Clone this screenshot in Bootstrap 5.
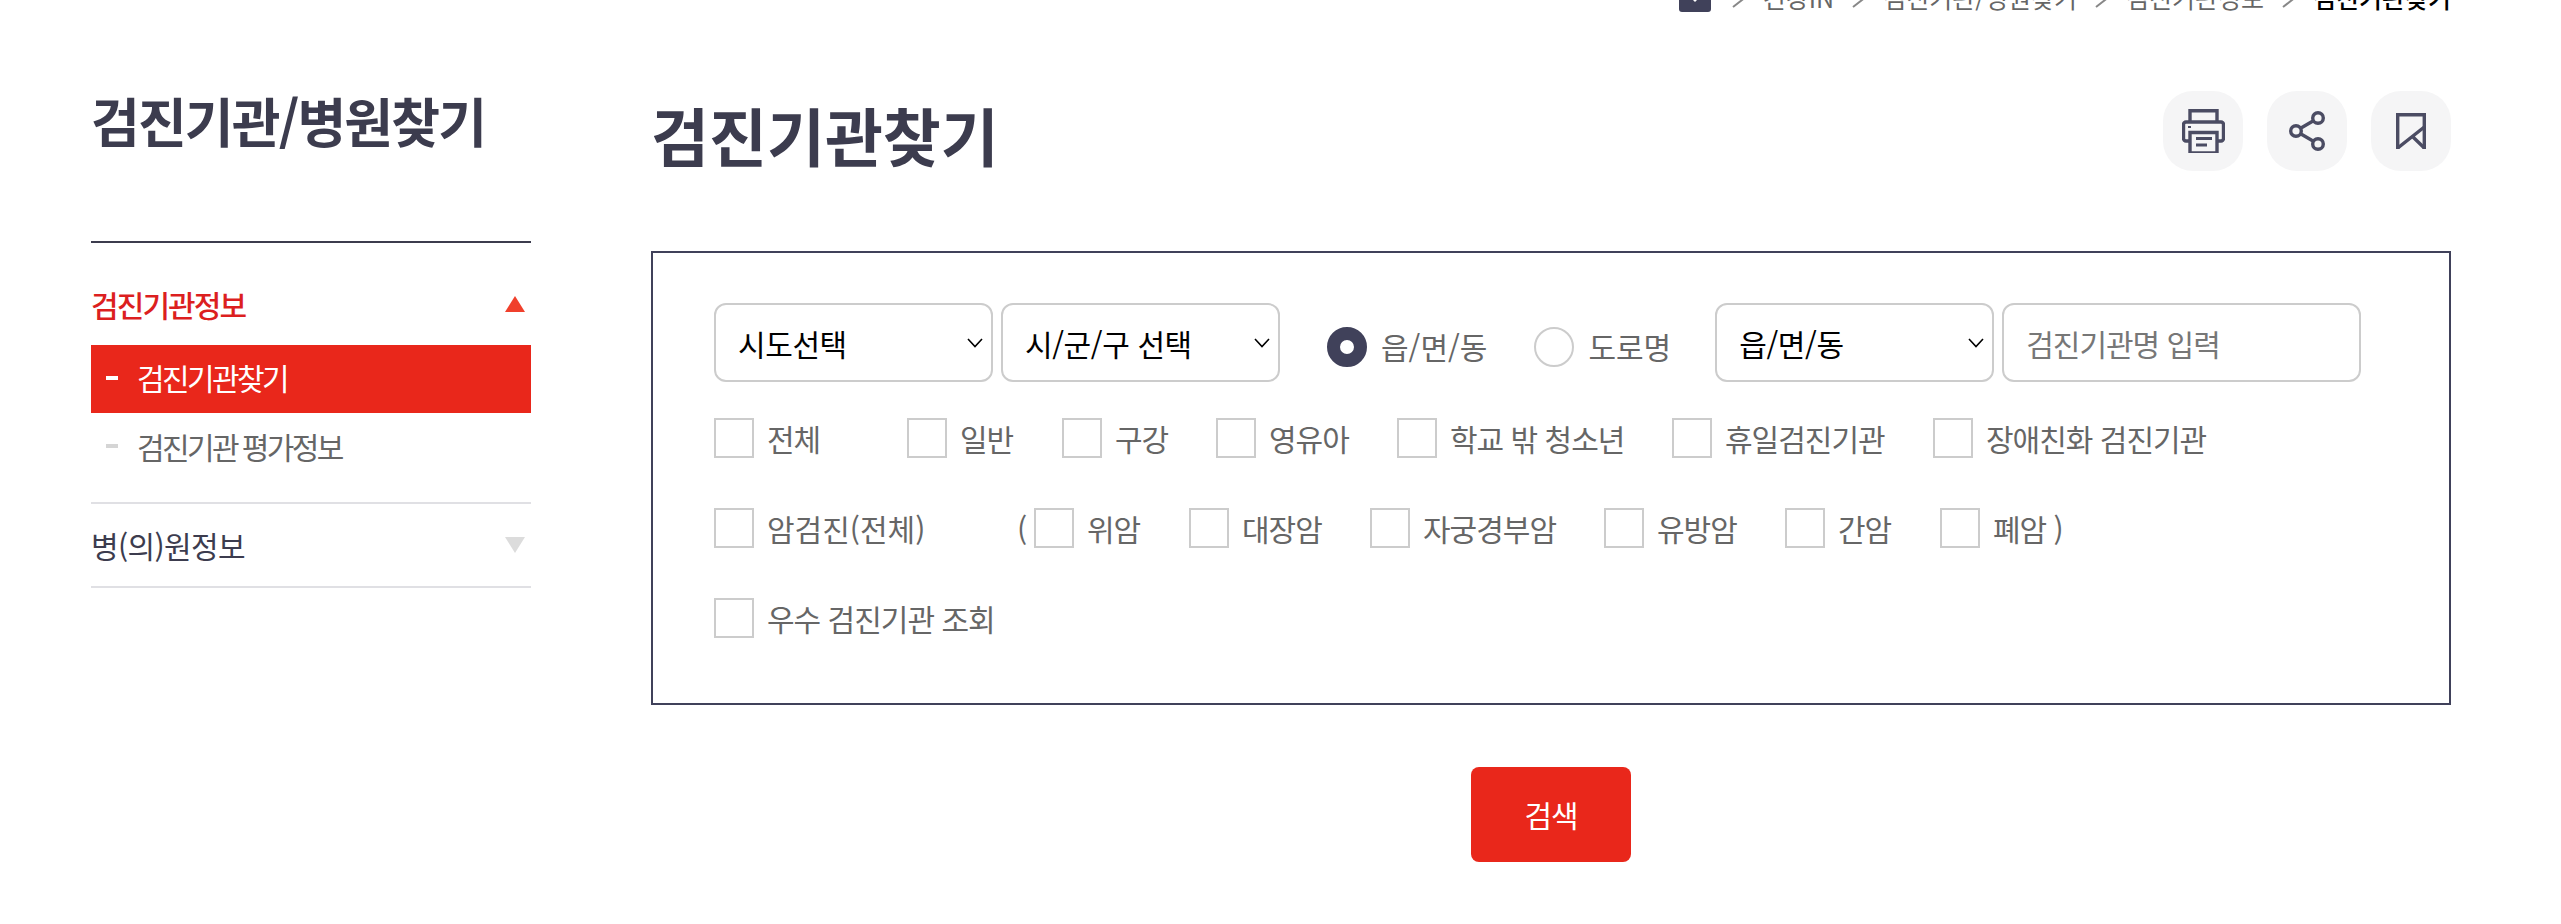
<!DOCTYPE html>
<html lang="ko">
<head>
<meta charset="utf-8">
<title>검진기관찾기</title>
<link href="https://cdn.jsdelivr.net/npm/bootstrap@5.3.0/dist/css/bootstrap.min.css" rel="stylesheet">
<style>
html,body{height:924px;overflow:hidden;background:#fff}
body{font-family:"Noto Sans CJK KR","Noto Sans",sans-serif;color:#3c3c4e;font-size:30px}
.crumbs{height:21px;margin-top:-21px;padding-right:110px;font-size:25px;line-height:37px;color:#666}
.crumbs .home{width:32px;height:33px;flex:none;margin-right:3px}
.crumbs svg.sep{width:14px;height:16px;margin:13px 18px 0 17px;flex:none}
.crumbs b{font-weight:500;color:#000}
.page-wrap{padding:0 110px 0 91px}
.side{width:440px;flex:none}
.side-title{font-size:53px;font-weight:700;line-height:70px;letter-spacing:-1.85px;color:#3c3c4e;margin:85px 0 0;height:156px;border-bottom:2px solid #3c3c4e;box-sizing:content-box}
.side-head{font-size:30px;letter-spacing:-.6px}
.side-head.on{color:#dc1f1f;font-weight:500;height:102px;padding-top:20px;letter-spacing:-1.9px}
.side-sub{height:66px;padding-left:15px;color:#666;letter-spacing:-2.6px;word-spacing:-1px}
.side-sub.on{background:#e9271b;color:#fff;height:68px;padding-bottom:3px}
.side-sub i{width:12px;height:4px;background:#d5d5d5;margin-right:19px;flex:none}
.side-sub.on i{background:#fff}
.side-group{padding-bottom:23px;border-bottom:2px solid #e0e0e4}
.side-two{height:84px;border-bottom:2px solid #e0e0e4}
.tri{width:20px;height:16px;margin-right:6px;flex:none}
.main-col{margin-left:120px;min-width:0;flex:1}
.main-head{height:251px;padding-top:91px}
.main-title{font-size:63px;font-weight:700;line-height:80px;color:#3c3c4e;margin:3px 0 0}
.tool{width:80px;height:80px;border-radius:30px;background:#f5f5f6;border:0;padding:0}
.search-box{border:2px solid #40415a;height:454px;padding:50px 60px 0 61px}
.fs,.fi{height:79px;border:2px solid #ccc;border-radius:12px;font-size:30px;letter-spacing:-.4px;color:#000;padding:0 22px;box-shadow:none}
.fs{background-image:url("data:image/svg+xml,%3csvg xmlns='http://www.w3.org/2000/svg' viewBox='0 0 18 12'%3e%3cpath fill='none' stroke='%23000' stroke-width='1.6' d='M2 2l7 7.5L16 2'/%3e%3c/svg%3e");background-size:18px 12px;background-position:right 7px center;padding-right:30px;line-height:1.2}
.fi{letter-spacing:-1px}
.fi::placeholder{color:#777}
.w-a{width:279px}
.w-b{width:279px;margin-left:8px}
.w-c{width:279px;margin-left:44px}
.w-d{width:359px;margin-left:8px}
.rd{width:40px;height:40px;margin:0 14px 0 0;border:2px solid #ccc;flex:none;box-shadow:none}
.rd:checked{background-color:#fff;background-image:none;border:13px solid #40415a}
.rd-item{color:#666;margin-left:47px;padding-top:8px}
.chk-row{height:90px;padding-top:36px;color:#666;line-height:40px}
input.chk[type=checkbox]{width:40px;height:40px;border:2px solid #ccc;border-radius:0;margin:0 13px 0 0;flex:none;box-shadow:none}
.it{flex:none;letter-spacing:-1px}
.it1{width:193px}.it2{width:155px}.it3{width:154px}.it4{width:181px}.it5{width:275px}.it6{width:261px}
.t1{width:303px;letter-spacing:0}.t3{width:155px}.t4{width:181px}.t5{width:234px}.t6{width:181px}.t7{width:155px}
.paren{width:17px;flex:none}
.go{width:160px;height:95px;background:#e9271b;color:#fff;border:0;border-radius:8px;font-size:30px;letter-spacing:-1px;padding:0}
.go:hover{background:#e9271b;color:#fff}
.go-wrap{margin-top:62px}
</style>
</head>
<body>
<nav class="crumbs d-flex justify-content-end">
  <svg class="home" viewBox="0 0 32 33"><rect width="32" height="33" rx="3" fill="#40415a"/><path d="M9 0v16l7 7 7-7V0z" fill="#fff"/></svg>
  <svg class="sep" viewBox="0 0 14 16"><path d="M2 1l9 7-9 7" fill="none" stroke="#888" stroke-width="2"/></svg>
  <span>건강IN</span>
  <svg class="sep" viewBox="0 0 14 16"><path d="M2 1l9 7-9 7" fill="none" stroke="#888" stroke-width="2"/></svg>
  <span>검진기관/병원찾기</span>
  <svg class="sep" viewBox="0 0 14 16"><path d="M2 1l9 7-9 7" fill="none" stroke="#888" stroke-width="2"/></svg>
  <span>검진기관정보</span>
  <svg class="sep" viewBox="0 0 14 16"><path d="M2 1l9 7-9 7" fill="none" stroke="#888" stroke-width="2"/></svg>
  <b>검진기관찾기</b>
</nav>
<div class="page-wrap d-flex">
  <aside class="side">
    <h2 class="side-title">검진기관/병원찾기</h2>
    <div class="side-group">
      <div class="side-head on d-flex align-items-center justify-content-between">검진기관정보
        <svg class="tri" viewBox="0 0 20 16"><path d="M10 0l10 16H0z" fill="#f0402c"/></svg></div>
      <div class="side-sub on d-flex align-items-center"><i></i>검진기관찾기</div>
      <div class="side-sub d-flex align-items-center"><i></i>검진기관 평가정보</div>
    </div>
    <div class="side-two side-head d-flex align-items-center justify-content-between">병(의)원정보
      <svg class="tri" viewBox="0 0 20 16"><path d="M10 16L20 0H0z" fill="#dcdcdc"/></svg></div>
  </aside>
  <main class="main-col">
    <div class="main-head d-flex justify-content-between align-items-start">
      <h1 class="main-title">검진기관찾기</h1>
      <div class="d-flex gap-4">
        <button class="tool d-flex align-items-center justify-content-center" aria-label="인쇄">
          <svg width="43" height="44" viewBox="0 0 43 44" fill="none" stroke="#4b4c63" stroke-width="3.4"><path d="M8 13V1.7h27V13"/><path d="M8 32H4a2.5 2.5 0 0 1-2.5-2.5v-14A2.5 2.5 0 0 1 4 13h35a2.5 2.5 0 0 1 2.5 2.5v14A2.5 2.5 0 0 1 39 32h-4"/><path d="M8 44V23.5h27V44z"/><path d="M14 29.5h16M14 36h11" stroke-width="2.8"/><path d="M6 18h3" stroke-width="2"/></svg>
        </button>
        <button class="tool d-flex align-items-center justify-content-center" aria-label="공유">
          <svg width="36" height="40" viewBox="0 0 36 40" fill="none" stroke="#4b4c63" stroke-width="3.4"><circle cx="7" cy="20" r="5.3"/><circle cx="29" cy="7" r="5.3"/><circle cx="29" cy="33" r="5.3"/><path d="M12 17l12-7M12 23l12 7"/></svg>
        </button>
        <button class="tool d-flex align-items-center justify-content-center" aria-label="스크랩">
          <svg width="30" height="36" viewBox="0 0 30 36" fill="none" stroke="#4b4c63" stroke-width="3.4"><path d="M1.7 36V1.7h26.6V36"/><path d="M1.7 35l26.6-21M17 24l11.3 11"/></svg>
        </button>
      </div>
    </div>
    <form class="search-box" onsubmit="return false">
      <div class="d-flex align-items-center">
        <select class="form-select fs w-a"><option>시도선택</option></select>
        <select class="form-select fs w-b"><option>시/군/구 선택</option></select>
        <label class="rd-item d-flex align-items-center"><input class="form-check-input rd" type="radio" name="addr" checked>읍/면/동</label>
        <label class="rd-item d-flex align-items-center"><input class="form-check-input rd" type="radio" name="addr">도로명</label>
        <select class="form-select fs w-c"><option>읍/면/동</option></select>
        <input class="form-control fi w-d" type="text" placeholder="검진기관명 입력">
      </div>
      <div class="chk-row d-flex">
        <label class="it it1 d-flex"><input class="form-check-input chk" type="checkbox">전체</label>
        <label class="it it2 d-flex"><input class="form-check-input chk" type="checkbox">일반</label>
        <label class="it it3 d-flex"><input class="form-check-input chk" type="checkbox">구강</label>
        <label class="it it4 d-flex"><input class="form-check-input chk" type="checkbox">영유아</label>
        <label class="it it5 d-flex"><input class="form-check-input chk" type="checkbox">학교 밖 청소년</label>
        <label class="it it6 d-flex"><input class="form-check-input chk" type="checkbox">휴일검진기관</label>
        <label class="it d-flex"><input class="form-check-input chk" type="checkbox">장애친화 검진기관</label>
      </div>
      <div class="chk-row d-flex">
        <label class="it t1 d-flex"><input class="form-check-input chk" type="checkbox">암검진(전체)</label>
        <span class="paren">(</span>
        <label class="it t3 d-flex"><input class="form-check-input chk" type="checkbox">위암</label>
        <label class="it t4 d-flex"><input class="form-check-input chk" type="checkbox">대장암</label>
        <label class="it t5 d-flex"><input class="form-check-input chk" type="checkbox">자궁경부암</label>
        <label class="it t6 d-flex"><input class="form-check-input chk" type="checkbox">유방암</label>
        <label class="it t7 d-flex"><input class="form-check-input chk" type="checkbox">간암</label>
        <label class="it d-flex"><input class="form-check-input chk" type="checkbox">폐암 )</label>
      </div>
      <div class="chk-row d-flex">
        <label class="it d-flex"><input class="form-check-input chk" type="checkbox">우수 검진기관 조회</label>
      </div>
    </form>
    <div class="go-wrap d-flex justify-content-center">
      <button class="btn go" type="button">검색</button>
    </div>
  </main>
</div>
</body>
</html>
